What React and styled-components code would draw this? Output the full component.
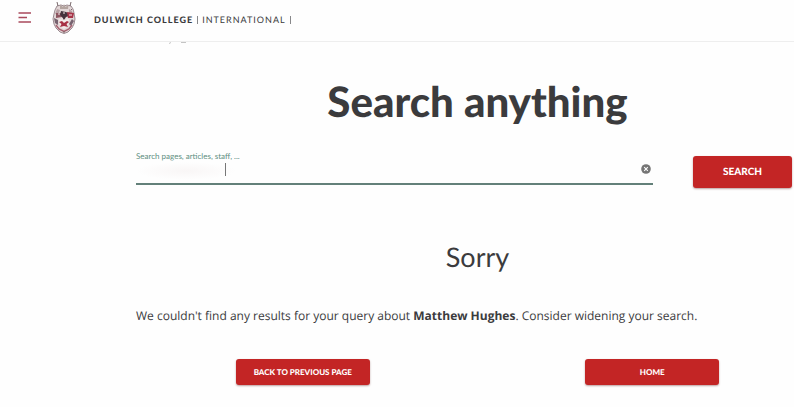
import { useState } from 'react';
import styled, { createGlobalStyle } from 'styled-components';

export default function App() {
  const [query, setQuery] = useState('');

  return (
    <Page>
      <GlobalStyle />
      <Header>
        <MenuButton type="button" aria-label="Menu">
          <svg width="14" height="11" viewBox="0 0 14 11">
            <path d="M0.5 1H13M0.5 5.5H9M0.5 10H13" stroke="#a94a5c" strokeWidth="1.5" />
          </svg>
        </MenuButton>
        <BrandLink href="/">
          <Crest />
          <BrandName>
            <strong>DULWICH COLLEGE</strong>
            <Divider />
            INTERNATIONAL
            <Divider />
          </BrandName>
        </BrandLink>
      </Header>
      <ScrolledLine />
      <Main>
        <Title>Search anything</Title>
        <SearchForm onSubmit={(e) => e.preventDefault()}>
          <Field>
            <Label htmlFor="query">Search pages, articles, staff, ...</Label>
            <InputRow>
              <Input id="query" value={query} onChange={(e) => setQuery(e.target.value)} />
              <Caret />
              <ClearButton type="button" aria-label="Clear" onClick={() => setQuery('')}>
                <svg width="10" height="10" viewBox="0 0 10 10">
                  <circle cx="5" cy="5" r="4.8" fill="#757575" />
                  <path d="M3.2 3.2L6.8 6.8M6.8 3.2L3.2 6.8" stroke="#fff" strokeWidth="1.1" />
                </svg>
              </ClearButton>
            </InputRow>
          </Field>
          <SearchButton type="submit">SEARCH</SearchButton>
        </SearchForm>
        <Subtitle>Sorry</Subtitle>
        <Message>
          We couldn't find any results for your query about <strong>Matthew Hughes</strong>. Consider
          widening your search.
        </Message>
        <Actions>
          <ActionButton type="button">BACK TO PREVIOUS PAGE</ActionButton>
          <ActionButton type="button">HOME</ActionButton>
        </Actions>
      </Main>
    </Page>
  );
}

function Crest() {
  return (
    <svg width="24" height="32" viewBox="0 0 24 32" role="img" aria-label="Crest">
      <path
        d="M5 4L3 8L2 12L1 17L2 22L4 26L8 30L12 31.5L16 30L20 26L22 22L23 17L22 11L21 7L19 4L15 3L12 4L9 3Z"
        fill="#e2d6d6"
        stroke="#9b8b91"
      />
      <path d="M8 2.5L11 5L12 2L13.5 5L16.5 3L16 7H8Z" fill="#b3a49f" />
      <path d="M5 7L8 8L7 11L3 12ZM17 7L20 9L21 13L17 11Z" fill="#b7a0a4" />
      <path d="M4 11H11L10 15L4 16Z" fill="#8e5460" />
      <path d="M9 9L14 10L16 11L17 14L14 15L12 18L10 15L8 13Z" fill="#45333c" />
      <path d="M15 10L22 11L21 16L16 16Z" fill="#a73448" />
      <path d="M2 16L6 18L6 23L3 21ZM20 17L22 19L19 24L17 22Z" fill="#776370" />
      <path d="M7 17L11 18L17 17V21Q16 25 12 27Q8 25 7 21Z" fill="#f2e9e8" />
      <path
        d="M7 20L10 19L12 21L15 19L17 20L14.5 22L16 25L12 24L8 25L9.5 22Z"
        fill="#a72f43"
      />
      <path d="M4 23L7 27L12 29.5L17 27L20 23" fill="none" stroke="#a6606f" strokeWidth="1.4" />
      <path d="M11 11H13M6 12H8M17 13H20M9 17L11 17M14 17H16" stroke="#f3e6e6" strokeWidth="1" />
      <path d="M4 13L5 14M19 7L20 8M3 18L4 19M11 30H13M5 0L6 4M19 0L18 4" stroke="#78686b" />
    </svg>
  );
}

// bottom edge of the text that has scrolled under the header
function ScrolledLine() {
  return (
    <Remnant width="20" height="4" viewBox="0 0 20 4" aria-hidden="true">
      <path d="M1 1.5L3 0.5M13 0.5H18" stroke="#c4c4c4" fill="none" />
    </Remnant>
  );
}

const GlobalStyle = createGlobalStyle`
  * {
    box-sizing: border-box;
  }
  body {
    margin: 0;
    background: #fefefe;
    color: #3b3b3d;
    font-family: Lato, 'Liberation Sans', sans-serif;
    text-rendering: geometricPrecision;
  }
  button {
    padding: 0;
    border: 0;
    font-family: inherit;
    text-rendering: inherit;
    cursor: pointer;
  }
`;

const Page = styled.div`
  overflow: hidden;
`;

const Header = styled.header`
  display: flex;
  align-items: center;
  gap: 20px;
  height: 42px;
  padding: 0 18px 6px;
  border-bottom: 1px solid #eee;
`;

const MenuButton = styled.button`
  display: flex;
  background: none;
`;

const BrandLink = styled.a`
  display: flex;
  align-items: center;
  gap: 18px;
  color: inherit;
  text-decoration: none;
`;

const BrandName = styled.span`
  display: flex;
  align-items: center;
  padding-top: 4px;
  font-size: 9px;
  line-height: 12px;
  letter-spacing: 1px;

  strong {
    font-weight: 900;
  }
`;

const Divider = styled.span`
  width: 1px;
  height: 8px;
  margin: 0 4px;
  background: #88888a;
`;

const Remnant = styled.svg`
  display: block;
  margin-left: 168px;
`;

const Main = styled.main`
  margin: 0 -33px 0 128px;
  padding: 30px 8px 20px;
`;

const Title = styled.h1`
  margin: 0;
  font-size: 42px;
  line-height: 50px;
  font-weight: 900;
  text-align: center;
`;

const SearchForm = styled.form`
  display: grid;
  grid-template-columns: 1fr 126px;
  gap: 40px;
  align-items: start;
  padding-top: 25px;
`;

const Field = styled.div`
  border-bottom: 2px solid #638079;
`;

const Label = styled.label`
  display: block;
  color: #5f8f82;
  font-size: 8px;
  line-height: 10px;
`;

const InputRow = styled.div`
  position: relative;
  display: flex;
  align-items: center;
  height: 22px;
  padding-right: 2px;
`;

const Input = styled.input`
  flex: 1;
  min-width: 0;
  height: 20px;
  padding: 0;
  border: 0;
  outline: 0;
  background: radial-gradient(ellipse 50px 9px at 50px 9px, #f9f6f6, transparent);
  color: inherit;
  font: inherit;
  font-size: 13px;
`;

const Caret = styled.span`
  position: absolute;
  top: 2px;
  left: 89px;
  width: 1px;
  height: 13px;
  background: #777;
`;

const ClearButton = styled.button`
  display: flex;
  padding-bottom: 6px;
  background: none;
`;

const Button = styled.button`
  border-radius: 3px;
  background: #c32525;
  box-shadow: 0 1px 2px rgba(90, 20, 20, 0.4);
  color: #fff;
  font-weight: 900;
`;

const SearchButton = styled(Button)`
  width: 99px;
  height: 32px;
  margin-top: 5px;
  font-size: 10px;
`;

const Subtitle = styled.h2`
  margin: 52px 0 0;
  font-size: 27px;
  line-height: 34px;
  font-weight: 400;
  text-align: center;
`;

const Message = styled.p`
  margin: 32px 0 0;
  font-family: 'Open Sans', 'Liberation Sans', sans-serif;
  font-size: 12px;
  line-height: 20px;
`;

const Actions = styled.div`
  display: grid;
  grid-template-columns: 1fr 1fr;
  gap: 16px;
  justify-items: center;
  padding-top: 33px;
`;

const ActionButton = styled(Button)`
  width: 134px;
  height: 26px;
  font-size: 8px;
`;
